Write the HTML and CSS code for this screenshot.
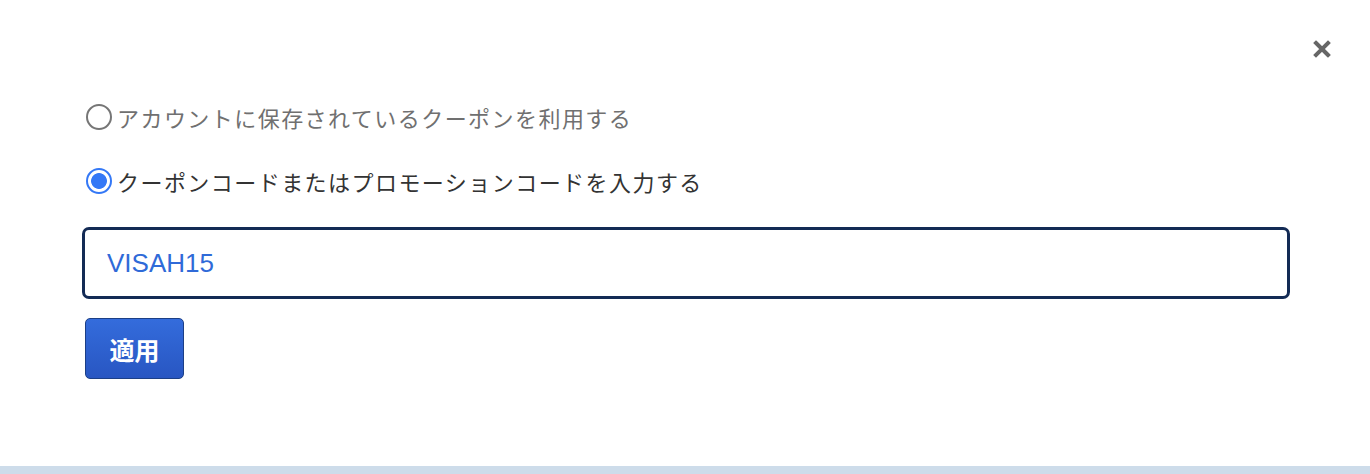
FILE: index.html
```html
<!DOCTYPE html>
<html lang="ja">
<head>
<meta charset="utf-8">
<title>クーポン</title>
<link rel="stylesheet" href="styles.css">
</head>
<body>
<div class="modal">
  <button class="close" aria-label="閉じる">
    <svg width="18" height="18" viewBox="0 0 18 18"><path d="M3 3 L15 15 M15 3 L3 15" stroke="#666" stroke-width="4" stroke-linecap="square"/></svg>
  </button>
  <div class="content">
    <label class="option muted">
      <input type="radio" name="coupon" class="radio">
      <span>アカウントに保存されているクーポンを利用する</span>
    </label>
    <label class="option last">
      <input type="radio" name="coupon" class="radio" checked>
      <span>クーポンコードまたはプロモーションコードを入力する</span>
    </label>
    <input type="text" class="code" value="VISAH15">
    <button class="apply">適用</button>
  </div>
</div>
<div class="footer-strip"></div>
</body>
</html>
```

FILE: styles.css
```css
html, body {
  margin: 0;
  padding: 0;
  background: #fff;
}
body {
  font-family: "Noto Sans CJK JP", "Liberation Sans", sans-serif;
  height: 474px;
  display: flex;
  flex-direction: column;
}
.modal {
  position: relative;
  flex: 1;
}
.close {
  position: absolute;
  top: 40px;
  right: 39px;
  width: 18px;
  height: 18px;
  padding: 0;
  border: 0;
  background: none;
  display: block;
}
.close svg { display: block; }
.content {
  padding: 103px 0 0 82px;
  width: 1208px;
  display: flex;
  flex-direction: column;
  align-items: flex-start;
}
.option {
  display: flex;
  align-items: center;
  gap: 5px;
  height: 28px;
  margin-bottom: 36px;
  font-size: 22px;
  letter-spacing: 1.45px;
  color: #333;
  padding-left: 4px;
}
.option.last { margin-bottom: 32px; }
.option.muted { color: #707070; }
.radio {
  appearance: none;
  -webkit-appearance: none;
  margin: 0;
  width: 26px;
  height: 26px;
  border-radius: 50%;
  border: 2px solid #767676;
  background: #fff;
  flex: none;
}
.radio:checked {
  border: 2.5px solid #3478f6;
  background: radial-gradient(circle, #3478f6 0 7.5px, #fff 8.3px);
}
.code {
  box-sizing: border-box;
  width: 1208px;
  height: 72px;
  border: 3.5px solid #132b55;
  border-radius: 7px;
  padding: 0 22px;
  font-family: "Liberation Sans", Arial, sans-serif;
  font-size: 26px;
  color: #2f6ad8;
  outline: none;
  background: #fff;
}
.apply {
  margin-top: 19px;
  margin-left: 3px;
  width: 99px;
  height: 61px;
  border: 1px solid #1c3f86;
  border-radius: 5px;
  background: linear-gradient(#346cdc, #2856c2);
  color: #fff;
  font-family: "Noto Sans CJK JP", sans-serif;
  font-weight: bold;
  font-size: 25px;
  padding: 0;
}
.footer-strip {
  height: 8px;
  background: #cddcea;
  flex: none;
}
```
